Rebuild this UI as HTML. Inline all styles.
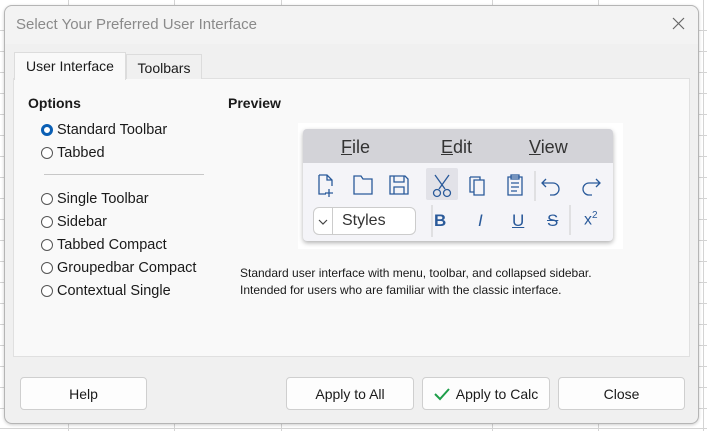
<!DOCTYPE html>
<html><head><meta charset="utf-8"><style>
*{box-sizing:border-box;margin:0;padding:0}
body{width:707px;height:431px;overflow:hidden;background:#fff;font-family:"Liberation Sans",sans-serif;position:relative;font-size:14px;color:#1a1a1a}
.gv{position:absolute;top:0;bottom:0;width:1px;background:#d4d4d4}
.gh{position:absolute;left:0;right:0;height:1px;background:#d4d4d4}
.dlg{position:absolute;left:4px;top:5px;width:695px;height:419px;background:#f0f0f0;border:1px solid #b5b5b5;border-radius:8px;box-shadow:0 1px 3px rgba(0,0,0,.2)}
.a{position:absolute}
.title{left:11px;top:10px;color:#8a8a8a;font-size:15px}
.panel{left:8px;top:72px;width:677px;height:279px;background:#f9f9f9;border:1px solid #e0e0e0}
.tab{top:46px;height:27px;border:1px solid #dcdcdc;border-bottom:none;font-size:14px;padding-top:5px;text-align:center}
.opt{left:36px;font-size:14.5px;display:flex;align-items:center;gap:4px}
.r{width:12px;height:12px;border:1px solid #555;border-radius:50%;background:#fff}
.rs{width:12px;height:12px;border-radius:50%;border:3.5px solid #0a5fb4;background:#fff}
.btn{top:371px;height:33px;background:#fdfdfd;border:1px solid #cfcfcf;border-radius:4px;font-size:14px;display:flex;align-items:center;justify-content:center;gap:6px}
</style></head><body>
<div class="gv" style="left:68px"></div><div class="gv" style="left:174px"></div><div class="gv" style="left:281px"></div><div class="gv" style="left:492px"></div><div class="gv" style="left:598px"></div><div class="gv" style="left:703px"></div>
<div class="gh" style="top:30px"></div><div class="gh" style="top:51px"></div><div class="gh" style="top:72px"></div><div class="gh" style="top:93px"></div><div class="gh" style="top:114px"></div><div class="gh" style="top:135px"></div><div class="gh" style="top:156px"></div><div class="gh" style="top:177px"></div><div class="gh" style="top:198px"></div><div class="gh" style="top:219px"></div><div class="gh" style="top:240px"></div><div class="gh" style="top:261px"></div><div class="gh" style="top:282px"></div><div class="gh" style="top:303px"></div><div class="gh" style="top:324px"></div><div class="gh" style="top:345px"></div><div class="gh" style="top:366px"></div><div class="gh" style="top:387px"></div><div class="gh" style="top:408px"></div><div class="gh" style="top:428px"></div>
<div class="dlg">
 <div class="a" style="left:0;right:0;top:0;height:38px;background:#f3f3f3;border-radius:8px 8px 0 0"></div>
 <div class="a title">Select Your Preferred User Interface</div>
 <svg class="a" style="left:667px;top:11px" width="13" height="13"><path d="M1 1L12 12M12 1L1 12" stroke="#666" stroke-width="1.2"/></svg>
 <div class="a panel"></div>
 <div class="a tab" style="left:9px;width:112px;background:#f9f9f9;height:28px">User Interface</div>
 <div class="a tab" style="left:121px;width:76px;top:48px;height:25px;padding-top:5px;background:#f0f0f0">Toolbars</div>
 <div class="a" style="left:23px;top:89px;font-weight:bold;font-size:14px">Options</div>
 <div class="a" style="left:223px;top:89px;font-weight:bold;font-size:14px">Preview</div>
 <div class="a opt" style="top:116px"><div class="rs"></div>Standard Toolbar</div>
 <div class="a opt" style="top:139px"><div class="r"></div>Tabbed</div>
 <div class="a" style="left:39px;top:168px;width:160px;height:1px;background:#c8c8c8"></div>
 <div class="a opt" style="top:185px"><div class="r"></div>Single Toolbar</div>
 <div class="a opt" style="top:208px"><div class="r"></div>Sidebar</div>
 <div class="a opt" style="top:231px"><div class="r"></div>Tabbed Compact</div>
 <div class="a opt" style="top:254px"><div class="r"></div>Groupedbar Compact</div>
 <div class="a opt" style="top:277px"><div class="r"></div>Contextual Single</div>
 <div class="a" style="left:293px;top:117px;width:325px;height:126px;background:#fff"></div>
 <div class="a" style="left:298px;top:123px;width:310px;height:112px;background:#f4f4f8;border-radius:4px;box-shadow:0 2px 5px rgba(0,0,0,.3);overflow:hidden">
  <div style="height:34px;background:#d3d3d8;position:relative;font-size:18px;color:#333">
   <span class="a" style="left:38px;top:8px"><u>F</u>ile</span>
   <span class="a" style="left:138px;top:8px"><u>E</u>dit</span>
   <span class="a" style="left:226px;top:8px"><u>V</u>iew</span>
  </div>
  <svg class="a" style="left:0;top:34px" width="312" height="79" fill="none" stroke="#2a5a9a" stroke-width="1.3">
   <path d="M16 12h8l5 5v6M16 12v19h7M24 12v5h5M26 26v8M22 30h8"/>
   <path d="M51 13h7l2 3h9v15H51z"/>
   <path d="M87 13h15l3 3v15H87zM91 13v6h10v-6M91 31v-7h10v7"/>
   <rect x="123" y="5" width="32" height="32" rx="2" fill="#e2e2e8" stroke="none"/>
   <path d="M132 12l10 14M146 12l-10 14"/><circle cx="134" cy="30" r="3.5"/><circle cx="144" cy="30" r="3.5"/>
   <path d="M167 14h10v3M171 17h10v15h-10zM167 14v15h4"/>
   <path d="M205 14h14v18h-14zM208 12h8v4h-8zM208 20h8M208 24h8M208 28h6"/>
   <path d="M232 8v30M267 72V42M129 42v32" stroke="#ccc" stroke-width="1"/>
   <path d="M243 16l-4 4 4 4M239 20h11a6 6 0 0 1 0 12h-3"/>
   <path d="M293 16l4 4-4 4M297 20h-11a6 6 0 0 0 0 12h3"/>
  </svg>
  <div class="a" style="left:10px;top:78px;width:103px;height:28px;background:#fff;border:1px solid #ccc;border-radius:6px;font-size:16px;color:#333">
   <div class="a" style="left:18px;top:0;width:1px;height:26px;background:#ccc"></div>
   <svg class="a" style="left:3px;top:10px" width="12" height="8"><path d="M2 2l4 4 4-4" stroke="#444" fill="none" stroke-width="1.2"/></svg>
   <span class="a" style="left:28px;top:4px">Styles</span>
  </div>
  <div class="a" style="left:131px;top:82px;font-size:17px;font-weight:bold;color:#2a5a9a">B</div>
  <div class="a" style="left:175px;top:82px;font-size:17px;font-style:italic;color:#2a5a9a">I</div>
  <div class="a" style="left:209px;top:82px;font-size:17px;text-decoration:underline;color:#2a5a9a">U</div>
  <div class="a" style="left:244px;top:82px;font-size:17px;text-decoration:line-through;color:#2a5a9a">S</div>
  <div class="a" style="left:281px;top:81px;font-size:16px;color:#2a5a9a">x<sup style="font-size:10px">2</sup></div>
 </div>
 <div class="a" style="left:235px;top:259px;font-size:12px;line-height:17px">Standard user interface with menu, toolbar, and collapsed sidebar.<br>Intended for users who are familiar with the classic interface.</div>
 <div class="a btn" style="left:15px;width:127px">Help</div>
 <div class="a btn" style="left:281px;width:128px">Apply to All</div>
 <div class="a btn" style="left:417px;width:128px"><svg width="16" height="14"><path d="M1 7l5 5 9-10" stroke="#1e9e4a" stroke-width="2" fill="none"/></svg>Apply to Calc</div>
 <div class="a btn" style="left:553px;width:127px">Close</div>
</div>
</body></html>
